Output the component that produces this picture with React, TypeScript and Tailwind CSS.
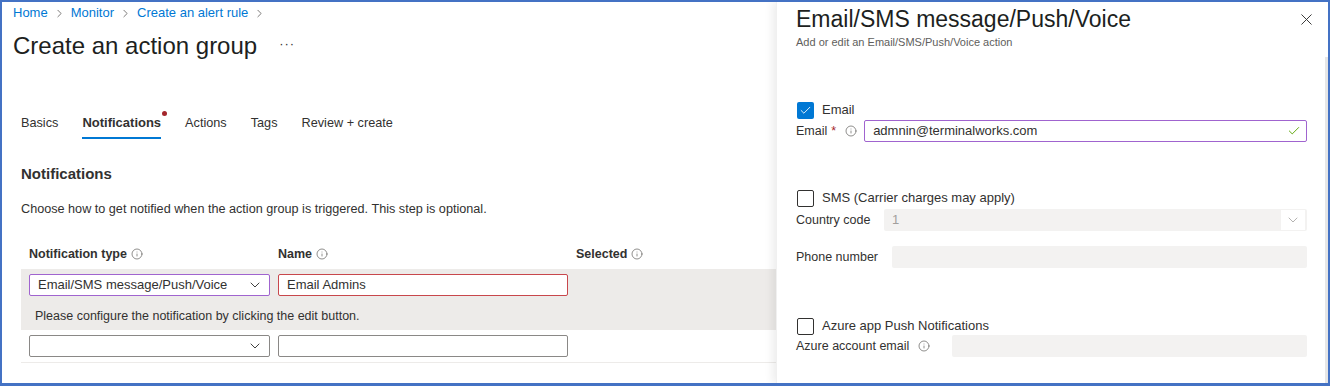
import { ChevronDown, ChevronRight, Check, X, Info } from "lucide-react";

const font = { fontFamily: '"Liberation Sans", Arial, sans-serif' };

const InfoIcon = ({ className = "" }: { className?: string }) => (
    <Info size={12} strokeWidth={1.4} className={"text-[#605e5c] " + className} />
);

const Crumb = ({ text }: { text: string }) => (
    <div className="flex items-center">
        <span className="text-[#0078d4]">{text}</span>
        <ChevronRight size={13} strokeWidth={1.5} className="mx-[5px] text-[#605e5c]" />
    </div>
);

const Checkbox = ({ checked, label }: { checked?: boolean; label: string }) => (
    <div className="flex items-center h-[18px]">
        {checked ? (
            <div className="w-[17px] h-[17px] ml-[1px] rounded-[2px] bg-[#0078d4] flex items-center justify-center">
                <Check size={13} strokeWidth={1.6} className="text-white" />
            </div>
        ) : (
            <div className="w-[17px] h-[17px] ml-[1px] rounded-[2px] border border-[#323130] bg-white" />
        )}
        <span className="ml-[8px] text-[13px] text-[#323130]">{label}</span>
    </div>
);

const Dropdown = ({ value, border }: { value?: string; border: string }) => (
    <div className={"w-[241px] h-[22px] bg-white border rounded-[2px] flex items-center justify-between pl-[8px] pr-[6px] " + border}>
        <span className="text-[13px] text-[#323130]">{value}</span>
        <ChevronDown size={16} strokeWidth={1.4} className="text-[#323130]" />
    </div>
);

const TextBox = ({ value, border }: { value?: string; border: string }) => (
    <div className={"w-[290px] h-[22px] bg-white border rounded-[2px] flex items-center pl-[8px] " + border}>
        <span className="text-[13px] text-[#323130]">{value}</span>
    </div>
);

export default function App() {
    return (
        <div style={font} className="w-[1330px] h-[386px] border-[#4472c4] border-t-2 border-l-2 border-r-2 border-b-[3px] flex overflow-hidden bg-white text-[#323130]">
            {/* page behind the flyout */}
            <div className="w-[774px] shrink-0 flex flex-col">
                <div className="flex items-center pt-[2px] pl-[11px] h-[20px] text-[13px] leading-[18px]">
                    <Crumb text="Home" />
                    <Crumb text="Monitor" />
                    <Crumb text="Create an alert rule" />
                </div>
                <div className="flex items-center mt-[8px] pl-[11px] h-[32px]">
                    <h1 className="text-[24px] leading-[32px] text-[#201f1e]">Create an action group</h1>
                    <span className="ml-[22px] text-[13px] text-[#323130] tracking-[1px] -mt-[4px]">···</span>
                </div>

                <div className="flex items-end gap-[24px] pl-[19px] mt-[51px] text-[12.7px] leading-[20px]">
                    <div className="pb-[6px]">Basics</div>
                    <div className="relative">
                        <div className="text-[13px] font-bold pb-[4px] border-b-2 border-[#0078d4]">Notifications</div>
                        <div className="absolute -right-[6px] -top-[2px] w-[5px] h-[5px] rounded-full bg-[#a4262c]" />
                    </div>
                    <div className="pb-[6px]">Actions</div>
                    <div className="pb-[6px]">Tags</div>
                    <div className="pb-[6px]">Review + create</div>
                </div>

                <h2 className="pl-[19px] mt-[24px] text-[15px] leading-[22px] font-bold text-[#323130]">Notifications</h2>
                <p className="pl-[19px] mt-[15px] text-[12.65px] leading-[18px]">
                    Choose how to get notified when the action group is triggered. This step is optional.
                </p>

                <div className="ml-[19px] mt-[27px]">
                    <div className="flex text-[12.5px] leading-[18px] font-bold">
                        <div className="w-[257px] pl-[8px] flex items-center gap-[4px]">
                            Notification type <InfoIcon />
                        </div>
                        <div className="w-[298px] flex items-center gap-[4px]">
                            Name <InfoIcon />
                        </div>
                        <div className="flex items-center gap-[4px]">
                            Selected <InfoIcon />
                        </div>
                    </div>

                    <div className="mt-[6px] bg-[#edebe9] pt-[5px] pb-[5px]">
                        <div className="flex gap-[8px] pl-[8px]">
                            <Dropdown value="Email/SMS message/Push/Voice" border="border-[#a064cf]" />
                            <TextBox value="Email Admins" border="border-[#c8474c]" />
                        </div>
                        <div className="mt-[11px] pl-[14px] text-[12.5px] leading-[18px]">
                            Please configure the notification by clicking the edit button.
                        </div>
                    </div>

                    <div className="pt-[5px] pb-[5px] border-b border-[#edebe9]">
                        <div className="flex gap-[8px] pl-[8px]">
                            <Dropdown border="border-[#8a8886]" />
                            <TextBox border="border-[#8a8886]" />
                        </div>
                    </div>
                </div>
            </div>

            {/* flyout panel */}
            <div className="flex-1 flex bg-white shadow-[-4px_0_8px_rgba(0,0,0,0.07)] border-l border-[#f0f0f0]">
                <div className="flex-1 flex flex-col pl-[19px] pr-[18px]">
                    <div className="flex items-start justify-between pt-[3px]">
                        <h2 className="text-[23px] leading-[28px] text-[#201f1e]">Email/SMS message/Push/Voice</h2>
                        <X size={19} strokeWidth={1.2} className="mt-[5px] -mr-[9px] text-[#323130]" />
                    </div>
                    <div className="mt-[1px] text-[11px] leading-[16px] text-[#605e5c]">Add or edit an Email/SMS/Push/Voice action</div>

                    <div className="mt-[51px]">
                        <Checkbox checked label="Email" />
                    </div>
                    <div className="flex items-center mt-[1px] h-[22px] text-[12.5px]">
                        <span>Email</span>
                        <span className="ml-[4px] text-[#a4262c]">*</span>
                        <InfoIcon className="ml-[9px]" />
                        <div className="ml-[7px] flex-1 h-[22px] border border-[#a064cf] rounded-[2px] flex items-center justify-between pl-[8px] pr-[5px]">
                            <span className="text-[13px]">admnin@terminalworks.com</span>
                            <Check size={14} strokeWidth={1.6} className="text-[#57a300]" />
                        </div>
                    </div>

                    <div className="mt-[47px]">
                        <Checkbox label="SMS (Carrier charges may apply)" />
                    </div>
                    <div className="flex items-center mt-[2px] h-[22px] text-[12.5px]">
                        <span className="w-[88px]">Country code</span>
                        <div className="flex-1 h-[22px] bg-[#f3f2f1] rounded-[2px] flex items-center justify-between pl-[8px] pr-[2px]">
                            <span className="text-[13px] text-[#a19f9d]">1</span>
                            <div className="w-[24px] h-[20px] bg-white flex items-center justify-center">
                                <ChevronDown size={16} strokeWidth={1.2} className="text-[#a19f9d]" />
                            </div>
                        </div>
                    </div>
                    <div className="flex items-center mt-[15px] h-[22px] text-[12.5px]">
                        <span className="w-[96px]">Phone number</span>
                        <div className="flex-1 h-[22px] bg-[#f3f2f1] rounded-[2px]" />
                    </div>

                    <div className="mt-[49px]">
                        <Checkbox label="Azure app Push Notifications" />
                    </div>
                    <div className="flex items-center h-[22px] text-[12.5px]">
                        <span>Azure account email</span>
                        <InfoIcon className="ml-[9px]" />
                        <div className="ml-[22px] flex-1 h-[22px] bg-[#f3f2f1] rounded-[2px]" />
                    </div>
                </div>
                <div className="w-[3px] shrink-0 flex flex-col">
                    <div className="mt-[55px] flex-1 bg-[#e6e6e6]" />
                </div>
            </div>
        </div>
    );
}
